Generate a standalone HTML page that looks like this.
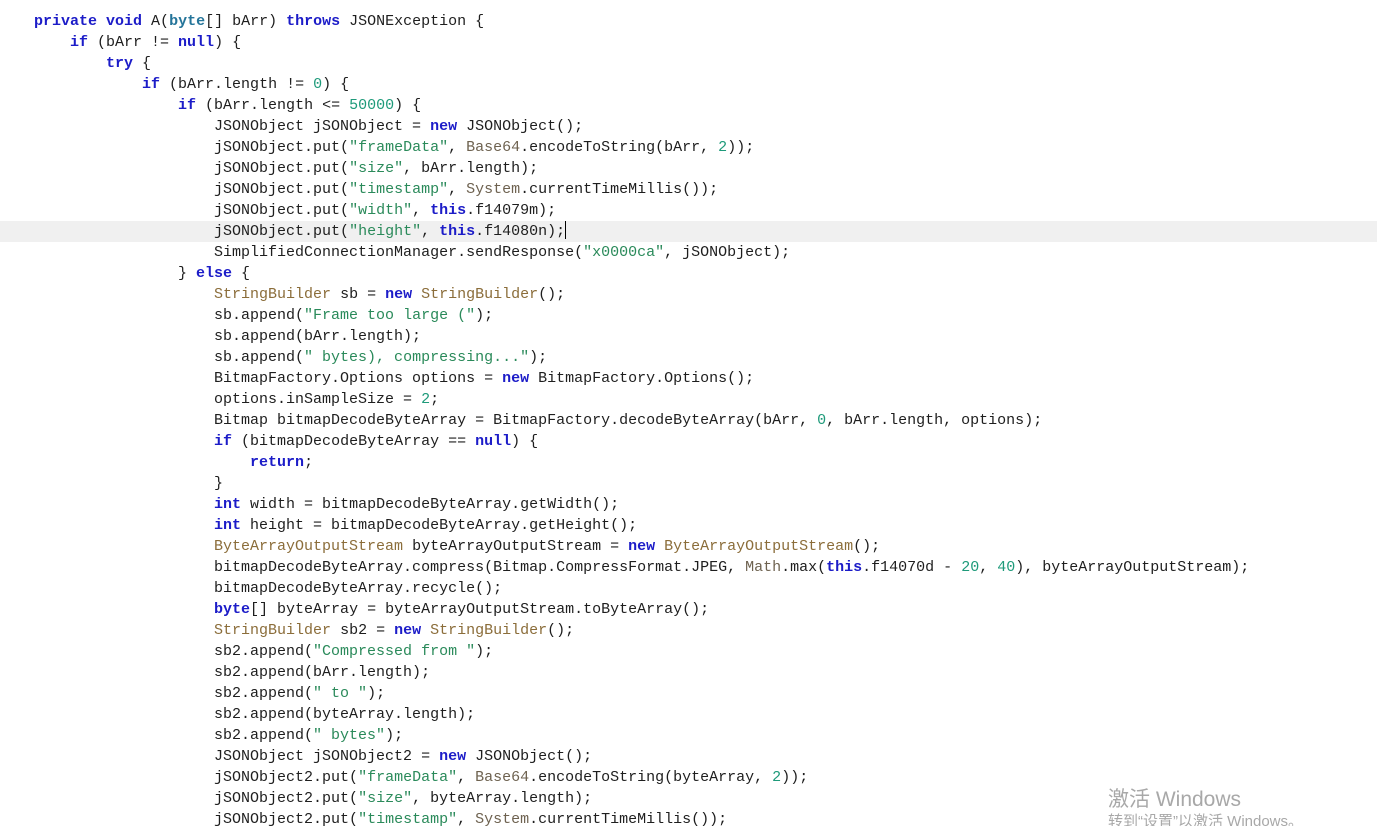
<!DOCTYPE html>
<html><head><meta charset="utf-8"><style>
html,body{margin:0;padding:0;background:#fff;width:1377px;height:826px;overflow:hidden;position:relative}
pre{margin:0;position:absolute;left:34px;top:11px;font:15px/21px "Liberation Mono",monospace;color:#1e1e1e;white-space:pre}
.k{color:#1c1cc8;font-weight:bold}
.t{color:#25759a;font-weight:bold}
.s{color:#2a8a5a}
.n{color:#1e9a7a}
.c{color:#8b6d3a}
.g{color:#6e6250}
.hl{position:absolute;left:0;top:221px;width:1377px;height:21px;background:#f0f0f0}
.cur{display:inline-block;width:1px;height:18px;background:#000;vertical-align:-4px}
.wm{position:absolute;left:1108px;color:#a8a8a8;font-family:"Liberation Sans","Noto Sans CJK SC",sans-serif;white-space:nowrap}
</style></head><body>
<div class="hl"></div>
<pre><span class="k">private</span> <span class="k">void</span> A(<span class="t">byte</span>[] bArr) <span class="k">throws</span> JSONException {
    <span class="k">if</span> (bArr != <span class="k">null</span>) {
        <span class="k">try</span> {
            <span class="k">if</span> (bArr.length != <span class="n">0</span>) {
                <span class="k">if</span> (bArr.length &lt;= <span class="n">50000</span>) {
                    JSONObject jSONObject = <span class="k">new</span> JSONObject();
                    jSONObject.put(<span class="s">"frameData"</span>, <span class="g">Base64</span>.encodeToString(bArr, <span class="n">2</span>));
                    jSONObject.put(<span class="s">"size"</span>, bArr.length);
                    jSONObject.put(<span class="s">"timestamp"</span>, <span class="g">System</span>.currentTimeMillis());
                    jSONObject.put(<span class="s">"width"</span>, <span class="k">this</span>.f14079m);
                    jSONObject.put(<span class="s">"height"</span>, <span class="k">this</span>.f14080n);<span class="cur"></span>
                    SimplifiedConnectionManager.sendResponse(<span class="s">"x0000ca"</span>, jSONObject);
                } <span class="k">else</span> {
                    <span class="c">StringBuilder</span> sb = <span class="k">new</span> <span class="c">StringBuilder</span>();
                    sb.append(<span class="s">"Frame too large ("</span>);
                    sb.append(bArr.length);
                    sb.append(<span class="s">" bytes), compressing..."</span>);
                    BitmapFactory.Options options = <span class="k">new</span> BitmapFactory.Options();
                    options.inSampleSize = <span class="n">2</span>;
                    Bitmap bitmapDecodeByteArray = BitmapFactory.decodeByteArray(bArr, <span class="n">0</span>, bArr.length, options);
                    <span class="k">if</span> (bitmapDecodeByteArray == <span class="k">null</span>) {
                        <span class="k">return</span>;
                    }
                    <span class="k">int</span> width = bitmapDecodeByteArray.getWidth();
                    <span class="k">int</span> height = bitmapDecodeByteArray.getHeight();
                    <span class="c">ByteArrayOutputStream</span> byteArrayOutputStream = <span class="k">new</span> <span class="c">ByteArrayOutputStream</span>();
                    bitmapDecodeByteArray.compress(Bitmap.CompressFormat.JPEG, <span class="g">Math</span>.max(<span class="k">this</span>.f14070d - <span class="n">20</span>, <span class="n">40</span>), byteArrayOutputStream);
                    bitmapDecodeByteArray.recycle();
                    <span class="k">byte</span>[] byteArray = byteArrayOutputStream.toByteArray();
                    <span class="c">StringBuilder</span> sb2 = <span class="k">new</span> <span class="c">StringBuilder</span>();
                    sb2.append(<span class="s">"Compressed from "</span>);
                    sb2.append(bArr.length);
                    sb2.append(<span class="s">" to "</span>);
                    sb2.append(byteArray.length);
                    sb2.append(<span class="s">" bytes"</span>);
                    JSONObject jSONObject2 = <span class="k">new</span> JSONObject();
                    jSONObject2.put(<span class="s">"frameData"</span>, <span class="g">Base64</span>.encodeToString(byteArray, <span class="n">2</span>));
                    jSONObject2.put(<span class="s">"size"</span>, byteArray.length);
                    jSONObject2.put(<span class="s">"timestamp"</span>, <span class="g">System</span>.currentTimeMillis());</pre>
<div class="wm" style="top:783px;font-size:21px">激活 Windows</div>
<div class="wm" style="top:810px;font-size:15px">转到“设置”以激活 Windows。</div>
</body></html>
